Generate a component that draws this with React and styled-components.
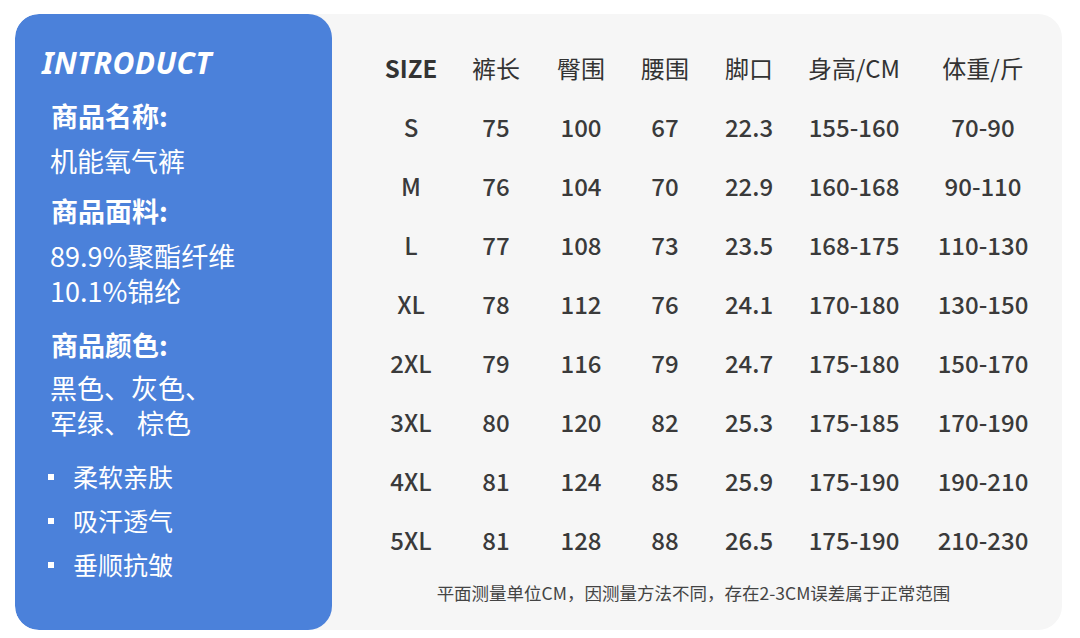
import React from "react";
import styled, { createGlobalStyle } from "styled-components";

const GlobalStyle = createGlobalStyle`
  html, body {
    margin: 0;
    padding: 0;
    background: #ffffff;
  }
  body {
    font-family: "Noto Sans", "Noto Sans CJK SC", sans-serif;
  }
`;

const Page = styled.div`
  width: 1080px;
  height: 638px;
  padding: 14px 18px 8px 15px;
  box-sizing: border-box;
`;

const Card = styled.div`
  display: flex;
  height: 616px;
  background: #f6f6f6;
  border-radius: 24px;
  overflow: hidden;
`;

const IntroPanel = styled.div`
  flex: 0 0 317px;
  background: #4b81da;
  border-radius: 24px;
  padding: 31px 0 0 27px;
  box-sizing: border-box;
  color: #ffffff;
  display: flex;
  flex-direction: column;
  font-family: "Noto Sans CJK SC", "Noto Sans", sans-serif;
`;

const Title = styled.div`
  font-family: "Noto Sans", "Open Sans", sans-serif;
  font-style: italic;
  font-weight: 700;
  font-size: 30px;
  line-height: 36px;
  letter-spacing: 0.4px;
`;

const Label = styled.div`
  font-weight: 700;
  font-size: 27px;
  line-height: 35px;
  margin-top: ${(p) => p.$top}px;
  padding-left: 9px;
`;

const Value = styled.div`
  font-size: 27px;
  line-height: 35px;
  margin-top: ${(p) => p.$top}px;
  padding-left: 8px;
`;

const Bullets = styled.ul`
  list-style: none;
  margin: 19px 0 0;
  padding: 0 0 0 6px;
  display: flex;
  flex-direction: column;
  gap: 9px;
`;

const Bullet = styled.li`
  display: flex;
  align-items: center;
  font-size: 25px;
  line-height: 35px;

  &::before {
    content: "";
    width: 6px;
    height: 6px;
    background: #ffffff;
    margin-right: 19px;
  }
`;

const SizePanel = styled.div`
  flex: 1;
  padding: 24px 0 0 37px;
  display: flex;
  flex-direction: column;
  font-family: "Noto Sans CJK SC", "Noto Sans", sans-serif;
  color: #3a3a3a;
`;

const Grid = styled.div`
  display: grid;
  grid-template-columns: 84px 86px 84px 84px 84px 126px 132px;
  grid-auto-rows: 59px;
`;

const Cell = styled.div`
  display: flex;
  align-items: center;
  justify-content: center;
  font-size: 24px;
  font-weight: ${(p) => (p.$head ? 400 : 500)};
  color: ${(p) => (p.$head ? "#333333" : "#3a3a3a")};
`;

const HeadSize = styled(Cell)`
  font-weight: 700;
`;

const Note = styled.div`
  margin: 12px 28px 0 -16px;
  text-align: center;
  font-size: 17.5px;
  line-height: 24px;
  color: #444444;
`;

const headers = ["裤长", "臀围", "腰围", "脚口", "身高/CM", "体重/斤"];

const rows = [
  ["S", "75", "100", "67", "22.3", "155-160", "70-90"],
  ["M", "76", "104", "70", "22.9", "160-168", "90-110"],
  ["L", "77", "108", "73", "23.5", "168-175", "110-130"],
  ["XL", "78", "112", "76", "24.1", "170-180", "130-150"],
  ["2XL", "79", "116", "79", "24.7", "175-180", "150-170"],
  ["3XL", "80", "120", "82", "25.3", "175-185", "170-190"],
  ["4XL", "81", "124", "85", "25.9", "175-190", "190-210"],
  ["5XL", "81", "128", "88", "26.5", "175-190", "210-230"],
];

export default function App() {
  return (
    <>
      <GlobalStyle />
      <Page>
        <Card>
          <IntroPanel>
            <Title>INTRODUCT</Title>
            <Label $top={17}>商品名称:</Label>
            <Value $top={10}>机能氧气裤</Value>
            <Label $top={15}>商品面料:</Label>
            <Value $top={10}>
              89.9%聚酯纤维
              <br />
              10.1%锦纶
            </Value>
            <Label $top={19}>商品颜色:</Label>
            <Value $top={8}>
              黑色、灰色、
              <br />
              军绿、 棕色
            </Value>
            <Bullets>
              <Bullet>柔软亲肤</Bullet>
              <Bullet>吸汗透气</Bullet>
              <Bullet>垂顺抗皱</Bullet>
            </Bullets>
          </IntroPanel>
          <SizePanel>
            <Grid>
              <HeadSize $head>SIZE</HeadSize>
              {headers.map((h) => (
                <Cell key={h} $head>
                  {h}
                </Cell>
              ))}
              {rows.map((r) =>
                r.map((v, i) => <Cell key={r[0] + i}>{v}</Cell>)
              )}
            </Grid>
            <Note>平面测量单位CM，因测量方法不同，存在2-3CM误差属于正常范围</Note>
          </SizePanel>
        </Card>
      </Page>
    </>
  );
}
